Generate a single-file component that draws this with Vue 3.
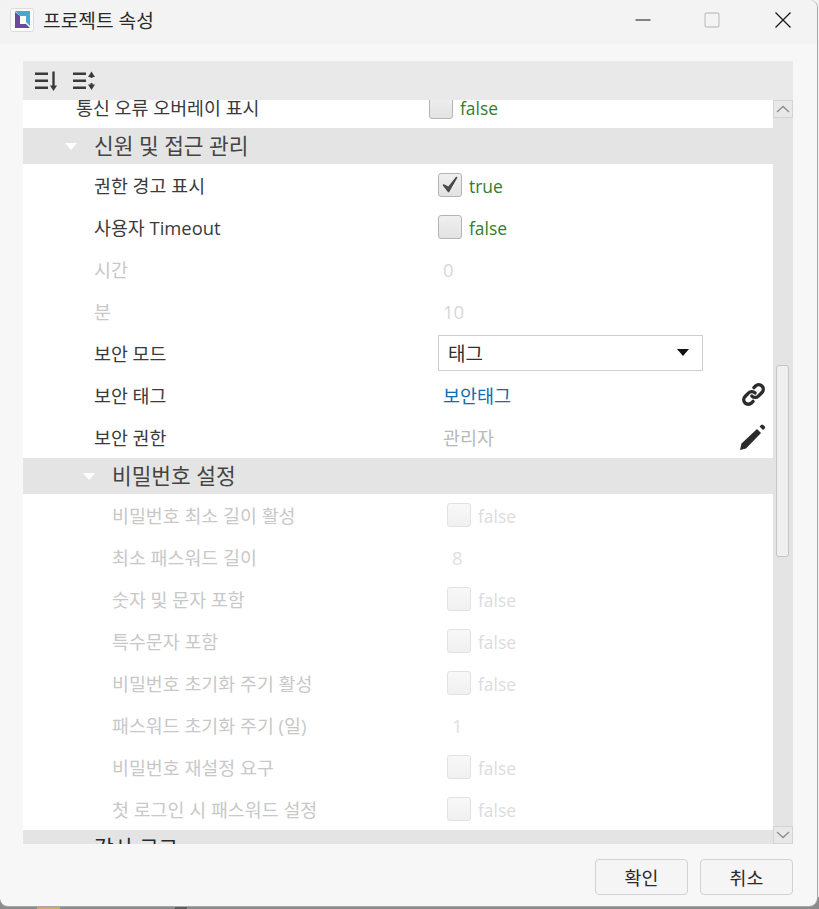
<script setup>
const firstRows = [
  { label: '권한 경고 표시', type: 'check', value: true },
  { label: '사용자 Timeout', type: 'check', value: false },
  { label: '시간', type: 'text', value: '0', off: true },
  { label: '분', type: 'text', value: '10', off: true },
  { label: '보안 모드', type: 'select', value: '태그' },
  { label: '보안 태그', type: 'link', value: '보안태그', icon: 'link' },
  { label: '보안 권한', type: 'text', value: '관리자', off: true, icon: 'pen', dark: true },
];

const pwRows = [
  { label: '비밀번호 최소 길이 활성', type: 'check', value: false },
  { label: '최소 패스워드 길이', type: 'text', value: '8' },
  { label: '숫자 및 문자 포함', type: 'check', value: false },
  { label: '특수문자 포함', type: 'check', value: false },
  { label: '비밀번호 초기화 주기 활성', type: 'check', value: false },
  { label: '패스워드 초기화 주기 (일)', type: 'text', value: '1' },
  { label: '비밀번호 재설정 요구', type: 'check', value: false },
  { label: '첫 로그인 시 패스워드 설정', type: 'check', value: false },
];
</script>

<template>
  <div class="desk">
    <!-- what shows of the desktop under the window -->
    <div class="under">
      <span class="under-y"></span>
      <span class="under-d"></span>
    </div>

    <div class="window">
      <header class="titlebar">
        <svg class="logo" width="24" height="24" viewBox="0 0 24 24">
          <rect x="0.5" y="0.5" width="23" height="23" rx="2" fill="#fbfbfb" stroke="#dcdcdc" />
          <path d="M5 3h15v15l-4-4V8H10z" fill="#4aa6cf" />
          <path d="M5 4l5 4v8h6l4 4H5z" fill="#6a4a9c" />
        </svg>
        <span class="title">프로젝트 속성</span>
        <div class="controls">
          <svg class="min" width="16" height="16" viewBox="0 0 16 16"><path d="M0.500 8h15" stroke="#111" stroke-width="1" /></svg>
          <svg width="16" height="16" viewBox="0 0 16 16"><rect x="1" y="1" width="14" height="14" rx="2" fill="none" stroke="#c8c8c8" stroke-width="1.4" /></svg>
          <svg width="18" height="18" viewBox="0 0 18 18"><path d="M1.500 1.500l15 15M16.500 1.500l-15 15" stroke="#1a1a1a" stroke-width="1.300" /></svg>
        </div>
      </header>

      <div class="content">
        <div class="toolbar">
          <svg width="24" height="24" viewBox="0 0 24 24">
            <path d="M0 3.500h13v2.600H0zM0 10.500h13v2.600H0zM0 17.500h13v2.600H0z" fill="#3a3a3a" />
            <path d="M17.300 2.500h2.400v15h-2.400z" fill="#3a3a3a" />
            <path d="M15 16.500h7l-3.500 5.500z" fill="#3a3a3a" />
          </svg>
          <svg width="24" height="24" viewBox="0 0 24 24">
            <path d="M0 3.500h13v2.600H0zM0 10.500h13v2.600H0zM0 17.500h13v2.600H0z" fill="#3a3a3a" />
            <path d="M17.500 6h2v3h-2zM17.500 14h2v3h-2z" fill="#3a3a3a" />
            <path d="M15 8l3.500-5.500L22 8zM15 15.500l3.500 5.500 3.500-5.500z" fill="#3a3a3a" />
          </svg>
        </div>

        <div class="pane">
          <div class="list">
            <div class="rows">
              <div class="row row-first">
                <span class="label">통신 오류 오버레이 표시</span>
                <span class="val">
                  <span class="box"></span>
                  <span class="bool">false</span>
                </span>
              </div>

              <div class="group">
                <span class="arrow"></span>
                <span>신원 및 접근 관리</span>
              </div>

              <div v-for="r in firstRows" :key="r.label" class="row" :class="{ off: r.off && !r.dark }">
                <span class="label l2">{{ r.label }}</span>
                <span class="val v2">
                  <template v-if="r.type === 'check'">
                    <span class="box">
                      <svg v-if="r.value" width="20" height="20" viewBox="0 0 20 20">
                        <path d="M3.500 10l5 6.500L16.500 2.500l-8 10z" fill="#4a4a4a" stroke="#4a4a4a" stroke-width="1.600" stroke-linejoin="round" />
                      </svg>
                    </span>
                    <span class="bool">{{ r.value }}</span>
                  </template>
                  <div v-else-if="r.type === 'select'" class="select">
                    <span>{{ r.value }}</span>
                    <span class="caret"></span>
                  </div>
                  <span v-else-if="r.type === 'link'" class="txt link">{{ r.value }}</span>
                  <span v-else class="txt muted">{{ r.value }}</span>
                </span>
                <svg v-if="r.icon === 'link'" class="row-icon" width="27" height="27" viewBox="0 0 24 24">
                  <path d="M10.600 13.400a4 4 0 0 0 5.700 0l3.200-3.200a4 4 0 0 0-5.700-5.700l-1.400 1.400" fill="none" stroke="#2b2b2b" stroke-width="3" stroke-linecap="round" />
                  <path d="M13.400 10.600a4 4 0 0 0-5.700 0l-3.200 3.200a4 4 0 0 0 5.700 5.700l1.400-1.400" fill="none" stroke="#2b2b2b" stroke-width="3" stroke-linecap="round" />
                </svg>
                <svg v-if="r.icon === 'pen'" class="row-icon" width="28" height="28" viewBox="0 0 28 28">
                  <path d="M1 27l1.500-6.500L18 6l4 4L7 25.500z" fill="#2b2b2b" />
                  <path d="M20.500 3.500l1.600-1.600a1.500 1.500 0 0 1 2.100 0l1.400 1.400a1.500 1.500 0 0 1 0 2.100L24 7z" fill="#2b2b2b" />
                </svg>
              </div>

              <div class="group sub">
                <span class="arrow"></span>
                <span>비밀번호 설정</span>
              </div>

              <div v-for="r in pwRows" :key="r.label" class="row off">
                <span class="label l3">{{ r.label }}</span>
                <span class="val v3">
                  <template v-if="r.type === 'check'">
                    <span class="box faint"></span>
                    <span class="bool faint-txt">false</span>
                  </template>
                  <span v-else class="txt faint-num">{{ r.value }}</span>
                </span>
              </div>

              <div class="group last">
                <span>감사 로그</span>
              </div>
            </div>
          </div>

          <div class="scroll">
            <div class="sb-btn">
              <svg width="14" height="8" viewBox="0 0 14 8"><path d="M1 7l6-5.500L13 7" fill="none" stroke="#8d8d8d" stroke-width="1.300" /></svg>
            </div>
            <div class="sb-track">
              <div class="thumb"></div>
            </div>
            <div class="sb-btn">
              <svg width="14" height="8" viewBox="0 0 14 8"><path d="M1 1l6 5.500L13 1" fill="none" stroke="#8d8d8d" stroke-width="1.300" /></svg>
            </div>
          </div>
        </div>
      </div>

      <footer class="footer">
        <button class="btn">확인</button>
        <button class="btn">취소</button>
      </footer>
    </div>
  </div>
</template>

<style>
html, body { margin: 0; background: #f2f2f2; }
</style>

<style scoped>
.desk {
  width: 819px;
  height: 909px;
  overflow: hidden;
  position: relative;
  background: #f2f2f2;
  font-family: "Open Sans", "Noto Sans CJK KR", sans-serif;
}
.under {
  position: absolute;
  left: 0;
  right: 0;
  bottom: 0;
  height: 12px;
  background: #8b8b8b;
}
.under-y {
  position: absolute;
  left: 37px;
  width: 23px;
  bottom: 0;
  height: 3px;
  background: #c9ad62;
}
.under-d {
  position: absolute;
  left: 175px;
  width: 12px;
  bottom: 0;
  height: 3px;
  background: #5e5e5e;
}
.window {
  position: relative;
  width: 817px;
  height: 906px;
  background: #f7f7f7;
  border-radius: 8px;
  box-shadow: 1px 0 0 #a8a8a8, 0 1px 0 #a8a8a8;
  display: flex;
  flex-direction: column;
  overflow: hidden;
}
.titlebar {
  height: 44px;
  flex: none;
  background: #f3f3f3;
  display: flex;
  align-items: center;
  padding: 0 0 4px 10px;
  box-sizing: border-box;
}
.logo { margin-right: 9px; }
.title { font-size: 19.200px; color: #2a2a2a; }
.controls {
  margin-left: auto;
  margin-right: 25px;
  display: flex;
  align-items: center;
  gap: 54px;
}
.min { margin-right: -1px; }
.content {
  flex: none;
  margin: 17px 0 0 23px;
  width: 770px;
  height: 783px;
  display: flex;
  flex-direction: column;
}
.toolbar {
  height: 39px;
  flex: none;
  background: #e9e9e9;
  display: flex;
  align-items: center;
  padding-left: 12px;
  gap: 14px;
}
.pane { flex: 1; display: flex; min-height: 0; }
.list { width: 750px; background: #fff; overflow: hidden; }
.rows { margin-top: -14px; }
.row {
  height: 42px;
  display: flex;
  align-items: center;
  font-size: 18.400px;
  color: #3a3a3a;
  position: relative;
}
.label { padding-left: 71px; width: 345px; flex: none; box-sizing: border-box; }
.row-first .label { padding-left: 53px; }
.l3 { padding-left: 89px; }
.val { display: flex; align-items: center; gap: 7px; }
.v2 { margin-left: 70px; }
.v3 { margin-left: 79px; }
.row-first .val { margin-left: 61px; }
.off .label { color: #c8c8c8; }
.box {
  width: 24px;
  height: 24px;
  box-sizing: border-box;
  border: 1px solid #b4b4b4;
  border-radius: 3px;
  background: linear-gradient(#f0f0f0, #e2e2e2);
  display: flex;
  align-items: center;
  justify-content: center;
}
.box.faint { background: linear-gradient(#f8f8f8, #f0f0f0); border-color: #e2e2e2; }
.bool { color: #2f7d2f; font-size: 17.400px; padding-top: 2px; }
.faint-txt { color: #dcdcdc; }
.txt { padding-left: 5px; font-size: 18.500px; }
.muted { color: #b8b8b8; }
.off .muted { color: #d8d8d8; }
.faint-num { color: #e0e0e0; }
.link { color: #0f6cb0; }
.select {
  width: 265px;
  height: 36px;
  box-sizing: border-box;
  border: 1px solid #cfcfcf;
  display: flex;
  align-items: center;
  justify-content: space-between;
  padding: 0 13px 1px 9px;
  font-size: 19px;
  color: #303030;
}
.caret {
  width: 0;
  height: 0;
  border-left: 6px solid transparent;
  border-right: 6px solid transparent;
  border-top: 7px solid #111;
}
.row-icon { position: absolute; right: 6px; top: 7px; }
.group {
  height: 36px;
  box-sizing: border-box;
  padding-bottom: 3px;
  background: #e4e4e4;
  display: flex;
  align-items: center;
  font-size: 21.400px;
  color: #444;
  padding-left: 42px;
}
.group .arrow { margin-top: 4px; }
.group .arrow + span { margin-left: 17px; }
.sub { padding-left: 60px; }
.last { padding-left: 71px; color: #2a2a2a; }
.arrow {
  width: 0;
  height: 0;
  border-left: 6px solid transparent;
  border-right: 6px solid transparent;
  border-top: 7px solid #fff;
}
.scroll {
  width: 20px;
  flex: none;
  background: #e4e4e4;
  display: flex;
  flex-direction: column;
}
.sb-btn {
  height: 18px;
  flex: none;
  display: flex;
  align-items: center;
  justify-content: center;
  background: #e8e8e8;
  border: 1px solid #d4d4d4;
  box-sizing: border-box;
}
.sb-track { flex: 1; padding-top: 247px; }
.thumb {
  width: 13px;
  height: 192px;
  margin-left: 3px;
  box-sizing: border-box;
  background: #efefef;
  border: 1px solid #c4c4c4;
  border-radius: 3px;
}
.footer {
  flex: 1;
  display: flex;
  justify-content: flex-end;
  gap: 12px;
  padding: 15px 24px 0 0;
}
.btn {
  width: 93px;
  height: 36px;
  font-family: inherit;
  font-size: 18.400px;
  color: #2a2a2a;
  background: #f5f5f5;
  border: 1px solid #d2d2d2;
  border-radius: 4px;
  padding: 0;
}
</style>
